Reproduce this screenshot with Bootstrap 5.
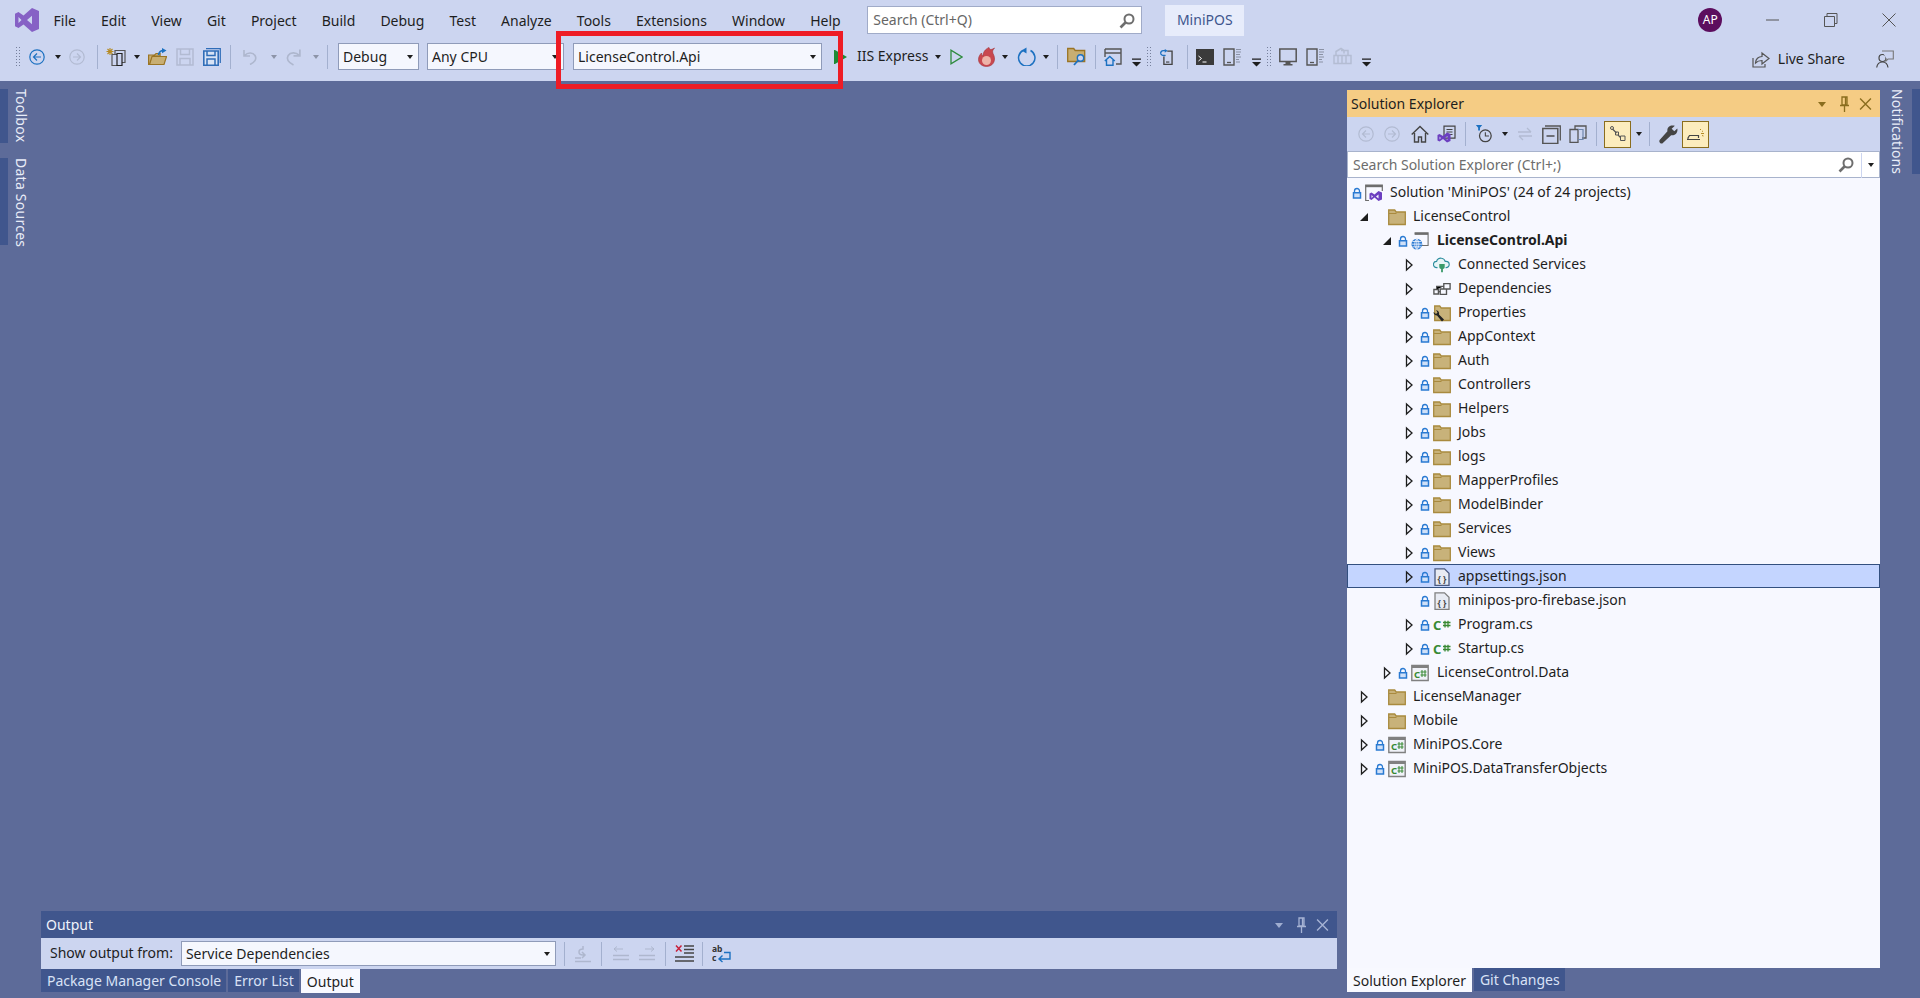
<!DOCTYPE html>
<html lang="en">
<head>
  <meta charset="UTF-8" />
  <meta name="viewport" content="width=device-width, initial-scale=1.0" />
  <title>MiniPOS - Visual Studio</title>
  <link href="https://cdn.jsdelivr.net/npm/bootstrap@5.3.1/dist/css/bootstrap.min.css" rel="stylesheet" />
  <style>
    html, body { height: 100%; }
    body { width: 1920px; height: 998px; overflow: hidden; background: #5d6b99; color: #1e1e1e;
      font: 14px/1.2 "Noto Sans", "Open Sans", sans-serif; position: relative; }
    .chrome { background: #ccd5f0; height: 81px; }
    .menu-row { height: 40px; }
    .tool-row { height: 41px; padding-bottom: 8px; }
    .vs-logo { width: 24px; height: 24px; margin-left: 15px; }
    .menu-row .nav { margin-left: 2px; }
    .menu-row .nav-link { color: #1e1e1e; padding: 1px 12.55px 0; line-height: 40px; font-size: 14px; }
    .top-search { width: 275px; height: 28px; margin-left: 14px; background: #fff; border: 1px solid #a0abc8; padding: 1px 6px 0 5px; color: #666; }
    .sol-name { width: 79px; height: 31px; margin-left: 23px; background: #e7ecfb; color: #40568d; }
    .avatar { width: 24px; height: 24px; background: #5c0e5e; color: #fff; font-size: 12px; margin-left: 454px; }
    .win-btn { width: 16px; height: 16px; }
    .win-min { margin-left: 43px; } .win-max { margin-left: 42px; } .win-x { margin-left: 42px; }

    .combo { height: 27px; background: #f5f7fe; border: 1px solid #8f9bb9; padding: 1px 5px 0 4px; flex: none; }
    .combo-debug { width: 81px; } .combo-cpu { width: 137px; } .combo-proj { width: 249px; }
    .combo-out { width: 375px; height: 25px; margin-left: 8px; }
    .caret { width: 0; height: 0; flex: none; border: 3.5px solid transparent; border-top: 4px solid #1e1e1e; border-bottom: 0; }
    .caret-off { border-top-color: #8d94a8; }
    .caret-lite { border-width: 5px 4.5px 0; border-top-color: #9fadd0; }
    .caret-gold { border-width: 5px 4.5px 0; border-top-color: #8a6d1e; }
    .sep { width: 1px; height: 24px; background: #a3b0cf; flex: none; }
    .grip { width: 5px; height: 22px; flex: none; background-image: radial-gradient(#76809c 0.8px, transparent 1px); background-size: 3px 3px; }
    svg { flex: none; }
    .i-blue { color: #1c71c1; } .i-off { color: #b2bbd2; } .i-lite { color: #a6b3d4; } .i-gold { color: #8a6d1e; }
    .json-on { color: #4a5a80; } .json-off { color: #808080; }
    .w9 { width: 9px; height: 20px; } .w13 { width: 13px; height: 16px; } .w16 { width: 16px; height: 16px; }
    .w17 { width: 17px; height: 20px; } .w18 { width: 18px; height: 18px; } .w19 { width: 19px; height: 19px; } .w20 { width: 20px; height: 20px; }
    .l4 { margin-left: 4px; } .l5 { margin-left: 5px; } .l7 { margin-left: 7px; } .l8 { margin-left: 8px; } .l9 { margin-left: 9px; }
    .l10 { margin-left: 10px; } .l11 { margin-left: 11px; } .l12 { margin-left: 12px; } .l13 { margin-left: 13px; } .l15 { margin-left: 15px; } .l31 { margin-left: 31px; }
    .live-share { margin-top: 5px; margin-right: 26px; }
    .red-box { position: absolute; left: 556px; top: 31px; width: 287px; height: 58px; border: 5px solid #ee1c25; }

    .work { height: 917px; }
    .rail-left { width: 41px; padding-top: 8px; }
    .rail-tab { color: #e9edf8; writing-mode: vertical-rl; font-size: 14px; line-height: 15px; letter-spacing: .25px; }
    .rail-strip { width: 8px; background: #40568d; }
    .tab-box { height: 54px; margin-bottom: 15px; }
    .tab-data { height: 87px; }
    .rail-text { margin-left: 6px; white-space: nowrap; }
    .center { width: 1296px; padding-bottom: 5px; }
    .out-title { height: 27px; background: #40568d; color: #f0f3fb; padding: 1px 8px 0 5px; }
    .out-tools { height: 31px; background: #ccd5f0; padding-left: 9px; }
    .tab-strip { height: 24px; }
    .tab-off { background: #40568d; color: #d9e2f6; padding: 2px 5px 0 6px; height: 23px; margin-right: 2px; }
    .tab-on { background: #f8f9ff; color: #1e1e1e; padding: 2px 6px 0; height: 24px; margin-right: 2px; }
    .sol-panel { width: 533px; margin-left: 10px; margin-top: 9px; }
    .sol-title { height: 27px; background: #f5cc84; padding: 1px 8px 0 4px; }
    .sol-tools { height: 34px; background: #ccd5f0; padding-left: 11px; }
    .on-btn { width: 27px; height: 27px; background: #fcecbd; border: 1px solid #8a6d1e; flex: none; }
    .sol-search { height: 27px; background: #fff; border: 1px solid #a8b3cc; padding: 1px 0 0 5px; color: #6d6d6d; }
    .search-div { width: 18px; margin-left: 7px; height: 25px; border-left: 1px solid #ccd5f0; }
    .sol-tree { height: 790px; background: #f7f8ff; padding-top: 2px; }
    .tree-row { height: 24px; padding-top: 1px; }
    .tree-on { background: #c4d5ff; box-shadow: inset 0 0 0 1px #33507f; }
    .lv0 { padding-left: 2px; } .lv1 { padding-left: 9px; } .lv2 { padding-left: 32px; } .lv3 { padding-left: 54px; }
    .xp { width: 16px; height: 14px; display: block; flex: none; }
    .lk { width: 16px; height: 14px; display: block; flex: none; }
    .ic { width: 18px; height: 18px; margin-right: 7px; flex: none; }
    .lv2 .ic { margin-right: 8px; }
    .rail-right { width: 40px; padding-top: 8px; }
    .rail-note { height: 85px; }
    .rail-right .rail-text { margin-left: 10px; margin-right: 7px; letter-spacing: .15px; }
  </style>
</head>
<body>
<svg class="d-none" xmlns="http://www.w3.org/2000/svg">
  <symbol id="i-vs" viewBox="0 0 24 24"><path fill="#8661c5" fill-rule="evenodd" d="M17 0l7 3v18l-7 3-8.500-7.500L3.500 20 0 18.300V5.700L3.500 4 8.500 7.500zM3.500 9v6L6.500 12zM12 12l5 4.200V7.800z"/></symbol>
  <symbol id="i-back" viewBox="0 0 16 16"><circle cx="8" cy="8" r="7.200" fill="none" stroke="currentColor" stroke-width="1.200"/><path fill="none" stroke="currentColor" stroke-width="1.200" d="M12 8H4.500M8 4.500L4.500 8 8 11.500"/></symbol>
  <symbol id="i-fwd" viewBox="0 0 16 16"><circle cx="8" cy="8" r="7.200" fill="none" stroke="currentColor" stroke-width="1.200"/><path fill="none" stroke="currentColor" stroke-width="1.200" d="M4 8h7.500M8 4.500L11.500 8 8 11.500"/></symbol>
  <symbol id="i-new" viewBox="0 0 20 20"><path stroke="#b58a22" stroke-width="1.100" d="M4 1v7M.5 4.500h7M1.500 2l5 5M6.500 2l-5 5"/><path fill="#ccd5f0" stroke="#555" stroke-width="1.200" d="M9 3.500h10v12H9z"/><path fill="#ccd5f0" stroke="#555" stroke-width="1.200" d="M6 7.500h6v11H6z"/><path fill="#ccd5f0" stroke="#222" stroke-width="1.200" d="M11 6.500h5v12h-5z"/></symbol>
  <symbol id="i-open" viewBox="0 0 19 18"><path fill="#c8ae72" stroke="#9a7424" stroke-width="1.200" d="M.6 7.500h6l1.500-1.500h4v2.500H5L2 17H.6z"/><path fill="#c8ae72" stroke="#9a7424" stroke-width="1.200" d="M4 9h14.500L16 17H1.500z"/><path fill="none" stroke="#1c71c1" stroke-width="1.700" d="M10.500 7.500c.5-3 2.500-4.500 5-4.500"/><path fill="#1c71c1" d="M14 .5L18.500 3 14 5.700z"/></symbol>
  <symbol id="i-save" viewBox="0 0 18 18"><path fill="none" stroke="currentColor" stroke-width="1.500" d="M1 1h16v16H1zM4.500 1v5.500h9V1M4 17v-6.500h10V17"/></symbol>
  <symbol id="i-saveall" viewBox="0 0 18 18"><path fill="none" stroke="#2f6db8" stroke-width="1.200" d="M3 .7h14.300V15"/><path fill="#d8e3f5" stroke="#2f6db8" stroke-width="1.600" d="M.8 3h14.400v14.200H.8z"/><path fill="none" stroke="#2f6db8" stroke-width="1.500" d="M4 3v4.500h8V3M4 17v-6h8v6"/></symbol>
  <symbol id="i-undo" viewBox="0 0 16 16"><path fill="none" stroke="#aeb7ce" stroke-width="1.600" d="M2 1v6h6M2.500 6.500C6 3 11 3.500 13 6.500c2 3.500 0 6.500-5 9"/></symbol>
  <symbol id="i-redo" viewBox="0 0 16 16"><path fill="none" stroke="#aeb7ce" stroke-width="1.600" d="M14 1v6H8M13.500 6.500C10 3 5 3.500 3 6.500c-2 3.500 0 6.500 5 9"/></symbol>
  <symbol id="i-play" viewBox="0 0 13 16"><path fill="#1e8a35" d="M0 1h1l12 7-12 7H0z"/></symbol>
  <symbol id="i-playo" viewBox="0 0 13 16"><path fill="none" stroke="#2e8b3e" stroke-width="1.300" d="M1 1.200v13.600L12 8z"/></symbol>
  <symbol id="i-fire" viewBox="0 0 17 20"><path fill="#c84850" stroke="#a33338" stroke-width=".6" d="M11 .5c.5 2.500 2.500 2.500 5.500.5-1.500 2-2.500 3-1.500 5.500 1 2 1.500 3.500 1.500 5.500 0 4.500-3.500 7.500-8 7.500S.5 16.500.5 12.500c0-3 1.500-5 3-6.500 0 1.500.5 2.500 1.500 3C5 5 7.500 2 11 .5z"/><ellipse cx="8.500" cy="13.500" rx="4.500" ry="4.500" fill="#eeb3a8"/></symbol>
  <symbol id="i-redo2" viewBox="0 0 19 19"><path fill="none" stroke="#1c71c1" stroke-width="1.500" d="M6 3.500a8.200 8.200 0 1 0 7.500 0"/><path fill="#1c71c1" d="M9.500 .5v6L4.500 3.500z"/></symbol>
  <symbol id="i-fsearch" viewBox="0 0 19 19"><path fill="#c8ae72" stroke="#9a7424" stroke-width="1.300" d="M.7 1.500h6l1.500 2h9.500v11H.7z"/><circle cx="13.500" cy="11" r="3.200" fill="#ccd5f0" stroke="#1c71c1" stroke-width="1.400"/><path stroke="#1c71c1" stroke-width="1.800" d="M11 13.500l-4 4.500"/></symbol>
  <symbol id="i-winhome" viewBox="0 0 18 18"><path fill="none" stroke="#555" stroke-width="1.400" d="M1 1h16v15h-5M1 1v8M1 5h16"/><path fill="#ccd5f0" stroke="#1c71c1" stroke-width="1.400" d="M.8 13l5-4.500 5 4.500M2.500 12v5.300h6.500V12"/></symbol>
  <symbol id="i-over" viewBox="0 0 9 20"><path fill="#1e1e1e" d="M0 11.500h9v1.300H0zM0 15h9L4.500 19.500z"/></symbol>
  <symbol id="i-phone" viewBox="0 0 16 19"><path fill="none" stroke="#444" stroke-width="1.600" d="M9.500 2.500h5.700v15.700H5.500V9"/><path stroke="#444" stroke-width="1.400" d="M8 15.500h4"/><path fill="none" stroke="#1c71c1" stroke-width="1.600" d="M7.500 7.500C5.500 8 3 7.500 2 6c-1-2 .5-4 3-4h2"/><path fill="#1c71c1" d="M6.500 0v4.500L10 2z"/></symbol>
  <symbol id="i-term" viewBox="0 0 18 16"><path fill="#3b3b3b" d="M0 0h18v16H0z"/><path fill="none" stroke="#fff" stroke-width="1" d="M2.500 7l3 2.500-3 2.500M6.500 13h4"/></symbol>
  <symbol id="i-tablet" viewBox="0 0 18 18"><path fill="#ccd5f0" stroke="#555" stroke-width="1.400" d="M1 1h10v16H1z"/><path stroke="#555" stroke-width="1.300" d="M4 14.500h4"/><path stroke="#8a91a4" stroke-width="1.200" d="M13 1.500h5M13 4h5M13 6.500h4M13 9h5M13 11.500h3M13 14h4"/></symbol>
  <symbol id="i-mon" viewBox="0 0 18 18"><path fill="#ccd5f0" stroke="#555" stroke-width="1.500" d="M.8 1h16.400v12.500H.8z"/><path fill="#555" d="M6.500 13.500h5V16h2v1.500h-9V16h2z"/></symbol>
  <symbol id="i-pkg" viewBox="0 0 19 18"><path fill="none" stroke="#b4bdd3" stroke-width="1.500" d="M3 8V4l5-3 3 2v3M1 8h17v8H1zM5 8v8M9 8v8M13 8v8M8 3h7v5"/></symbol>
  <symbol id="i-mag" viewBox="0 0 16 16"><circle cx="10" cy="6" r="4.500" fill="none" stroke="#6e6e6e" stroke-width="2"/><path stroke="#6e6e6e" stroke-width="2.600" d="M6.500 9.500L1.500 14.500"/></symbol>
  <symbol id="i-share" viewBox="0 0 18 18"><path fill="none" stroke="#555" stroke-width="1.200" d="M1 8v9h12v-3"/><path fill="#ccd5f0" stroke="#555" stroke-width="1.200" d="M3.500 13c0-4 3-6.500 6.500-6.500V3l7 5.500L10 14v-3.500c-3 0-5 1-6.500 2.500z"/></symbol>
  <symbol id="i-person" viewBox="0 0 18 18"><circle cx="6.500" cy="8" r="3.500" fill="none" stroke="#444" stroke-width="1.200"/><path fill="none" stroke="#444" stroke-width="1.200" d="M.7 17.500c.5-3.500 3-5.500 5.800-5.500s5 2 5.500 5.500"/><path fill="#ccd5f0" stroke="#777" stroke-width="1.100" d="M6 1h11.300v8H12l-2 2V8"/></symbol>
  <symbol id="i-pin" viewBox="0 0 12 16"><path fill="none" stroke="currentColor" stroke-width="1.300" d="M3.500 1h5v8h-5zM7 1v8M1.500 9.500h9M6 9.500V16"/></symbol>
  <symbol id="i-x" viewBox="0 0 12 12"><path fill="none" stroke="currentColor" stroke-width="1.300" d="M1 1l10 10M11 1L1 11"/></symbol>
  <symbol id="i-home" viewBox="0 0 18 18"><path fill="none" stroke="#444" stroke-width="1.400" d="M.7 9.500L9 1.500l8.300 8M3.500 8v9h4v-5h3v5h4V8"/></symbol>
  <symbol id="i-vsprops" viewBox="0 0 19 18"><path fill="#ccd5f0" stroke="#444" stroke-width="1.200" d="M7 .7h11v12H7z"/><path stroke="#444" stroke-width="1.100" d="M9.500 4h6M9.500 6.500h6M9.500 9h6"/><path fill="#6c3fc0" fill-rule="evenodd" d="M10 7l3.500 1.500v7L10 17l-4-3.500L2.500 16 .5 15V9.500l2-1L6 10.500zM2.500 11v3L4 12.500zM8 12.500l2.500 2v-4z"/></symbol>
  <symbol id="i-pending" viewBox="0 0 18 20"><path fill="#1c71c1" d="M0 0h7L4.500 3v3h-2V3z"/><circle cx="10.500" cy="12" r="6.500" fill="none" stroke="#444" stroke-width="1.400"/><path fill="none" stroke="#444" stroke-width="1.200" d="M10.500 8v4.300h4"/></symbol>
  <symbol id="i-sync" viewBox="0 0 16 16"><path fill="none" stroke="#b2bbd2" stroke-width="1.300" d="M1 6h13M10 2l4 4M15 10H2M6 14l-4-4"/></symbol>
  <symbol id="i-coll" viewBox="0 0 19 19"><path fill="none" stroke="#555" stroke-width="1.300" d="M3 1h15.300v14.500"/><path fill="#ccd5f0" stroke="#555" stroke-width="1.500" d="M.8 3.500h15v15H.8z"/><path stroke="#444" stroke-width="1.400" d="M4.500 11h8"/></symbol>
  <symbol id="i-copy" viewBox="0 0 18 18"><path fill="none" stroke="#555" stroke-width="1.300" d="M6 4V1h11v12h-4"/><path fill="#ccd5f0" stroke="#555" stroke-width="1.300" d="M1 4.500h8v13H1z"/><path fill="none" stroke="#6f87ad" stroke-width="1.200" d="M9 4.500h5v10H9"/></symbol>
  <symbol id="i-treev" viewBox="0 0 16 16"><path fill="none" stroke="#555" stroke-width="1.200" d="M2.500 3l4 4M8 9l2.500 2.500"/><circle cx="2" cy="2" r="1.500" fill="none" stroke="#555"/><path fill="none" stroke="#555" d="M5.500 6h3v3h-3zM10.500 10h4.500v4.500h-4.500z"/></symbol>
  <symbol id="i-wrench" viewBox="0 0 18 18"><path fill="#444" d="M12.500.5c-3 0-5 2.500-4.500 5.500L.8 14c-.8 1-.6 2.200.3 3 1 .8 2 .6 2.800-.3L11.500 9.700c3 .6 5.800-1.500 6-5 0-.5 0-1-.2-1.500L14.500 6 12 3.500 15 .8c-.8-.2-1.600-.3-2.500-.3z"/></symbol>
  <symbol id="i-sweep" viewBox="0 0 18 14"><path fill="none" stroke="#444" stroke-width="1.200" d="M1 12.500V11l1.500-2.500h9V11M0 12.500h13"/><path stroke="#b58a22" stroke-width="1" d="M13 2l1 1M16 4l-1 .5M14 6.500h3M15 8.500l1.500.5"/></symbol>
  <symbol id="i-down" viewBox="0 0 18 16"><path fill="none" stroke="#aeb7ce" stroke-width="1.500" d="M9 0v3c-3 0-4 1-4 3s1 3 4 3h1M8 6l3 3-3 3M1 12h6M1 15.500h16"/></symbol>
  <symbol id="i-prev" viewBox="0 0 16 16"><path fill="none" stroke="#aeb7ce" stroke-width="1" d="M1 3h9M4 .5L1 3l3 2.500"/><path stroke="#aeb7ce" stroke-width="1.700" d="M0 9.500h16M0 13.500h16"/></symbol>
  <symbol id="i-next" viewBox="0 0 16 16"><path fill="none" stroke="#aeb7ce" stroke-width="1" d="M6 3h9M12 .5L15 3l-3 2.500"/><path stroke="#aeb7ce" stroke-width="1.700" d="M0 9.500h16M0 13.500h16"/></symbol>
  <symbol id="i-clear" viewBox="0 0 19 18"><path fill="none" stroke="#c8203a" stroke-width="1.500" d="M1 1l5.500 6M6.500 1L1 7"/><path stroke="#444" stroke-width="1.300" d="M9 1.500h10M9 5h10M9 8.500h10"/><path stroke="#444" stroke-width="1.700" d="M0 12.500h19M0 16.500h19"/></symbol>
  <symbol id="i-wrap" viewBox="0 0 19 18"><text x="0" y="7.500" font-size="8.500" font-weight="700" font-family="Noto Sans" fill="#333">ab</text><text x="0" y="16" font-size="8.500" font-weight="700" font-family="Noto Sans" fill="#333">c</text><path fill="none" stroke="#1c71c1" stroke-width="1.400" d="M12 8h6v6.500H7M10.500 11L7 14.500l3.500 3"/></symbol>
  <symbol id="t-col" viewBox="0 0 16 14"><path fill="none" stroke="#1e1e1e" stroke-width="1.300" d="M5.500 2L11 7l-5.500 5z"/></symbol>
  <symbol id="t-exp" viewBox="0 0 16 14"><path fill="#1e1e1e" d="M12 3v8H4z"/></symbol>
  <symbol id="t-lock" viewBox="0 0 16 14"><path fill="none" stroke="#2a7ad2" stroke-width="1.300" d="M5.500 7V5a2.500 2.500 0 0 1 5 0v2"/><path fill="#cfe0f8" stroke="#2a7ad2" stroke-width="1.500" d="M4.500 6.800h7V12h-7z"/></symbol>
  <symbol id="t-folder" viewBox="0 0 18 18"><path fill="#c8b27a" stroke="#a98a3e" stroke-width="1.300" d="M.7 2h6l1.500 2h9.100v12.500H.7z"/><path stroke="#a98a3e" d="M1 5.500h7.500"/></symbol>
  <symbol id="t-sol" viewBox="0 0 18 18"><path fill="none" stroke="#6d6d6d" stroke-width="1.200" d="M.7 1h16.600v15.500H.7z"/><path fill="#6d6d6d" d="M.7 1h16.600v2.200H.7z"/><path fill="#f7f8ff" d="M4 7h14v11H4z"/><path fill="#6c3fc0" fill-rule="evenodd" d="M13.500 7l3.500 1.500v7L13.500 17l-4-3.500L6.500 16l-2-1V9.500l2-1 3 2zM6.500 11v3L8 12.500zM11 12.500l2.500 2v-4z"/></symbol>
  <symbol id="t-web" viewBox="0 0 20 20"><path fill="none" stroke="#6d6d6d" stroke-width="1.200" d="M4 1h15v14H12"/><path fill="#6d6d6d" d="M4 1h15v2.200H4z"/><circle cx="6.500" cy="13.500" r="6" fill="#2a7ad2"/><path fill="none" stroke="#f7f8ff" stroke-width=".9" d="M.5 13.500h12M1.500 10.500h10M1.500 16.500h10M6.500 7.500v12M6.500 7.500c-3 3-3 9 0 12M6.500 7.500c3 3 3 9 0 12"/></symbol>
  <symbol id="t-cloud" viewBox="0 0 20 18"><path fill="#e8f5f7" stroke="#2f8f9f" stroke-width="1.300" d="M5 12H4a3.500 3.500 0 0 1 0-7c.5-2.500 3-4 5.500-3.500 2 .3 3.500 1.500 4 3.500h1a3.500 3.500 0 0 1 0 7H14"/><path fill="#3a9a6a" d="M7 8h6v3c0 1.500-1 2.500-2 2.500V17H9v-3.500c-1 0-2-1-2-2.500z"/></symbol>
  <symbol id="t-dep" viewBox="0 0 20 18"><path fill="#f7f8ff" stroke="#555" stroke-width="1.500" d="M12 3h7v6h-7zM8 9h7v6H8zM1 9.500h5v5H1z"/><path stroke="#555" stroke-width="1.300" d="M6 12h2M4 9.500V6h8"/></symbol>
  <symbol id="t-props" viewBox="0 0 18 18"><path fill="#c8b27a" stroke="#a98a3e" stroke-width="1.300" d="M1.700 2h5l1.500 2h9.100v12.500H1.700z"/><path fill="#222" d="M.5 8c0 2 1.500 3.500 3.500 3.500l5 6 2-2-5-5c.5-2-.5-4-3-4.500l1.500 2.500L3 10z"/></symbol>
  <symbol id="t-json" viewBox="0 0 18 18"><path fill="#e8ebf3" stroke="currentColor" stroke-width="1.300" d="M2 .8h9.500l4.500 4.500v12H2z"/><text x="9" y="14" font-size="8.500" font-weight="700" text-anchor="middle" font-family="Noto Sans" fill="#444">{ }</text></symbol>
  <symbol id="t-cs" viewBox="0 0 18 18"><text x="0" y="14" font-size="13" font-weight="700" font-family="Noto Sans" fill="#388a34">C</text><path stroke="#388a34" stroke-width="1.300" d="M10 6.500h7.500M10 9.500h7.500M12 4.700v6.800M15 4.700v6.800"/></symbol>
  <symbol id="t-csproj" viewBox="0 0 18 18"><path fill="#f0f2f8" stroke="#808080" stroke-width="1.400" d="M.8 1.500h16.400v15H.8z"/><path stroke="#808080" stroke-width="2" d="M1 3h16"/><text x="3" y="13.500" font-size="9.500" font-weight="700" font-family="Noto Sans" fill="#388a34">C</text><path stroke="#388a34" d="M9.500 8h6M9.500 11h6M11 6v7M14 6v7"/></symbol>
</svg>

<div class="chrome">
  <div class="menu-row d-flex align-items-center">
    <svg class="vs-logo"><use href="#i-vs"/></svg>
    <ul class="nav flex-nowrap">
      <li class="nav-item"><a class="nav-link" href="#">File</a></li>
      <li class="nav-item"><a class="nav-link" href="#">Edit</a></li>
      <li class="nav-item"><a class="nav-link" href="#">View</a></li>
      <li class="nav-item"><a class="nav-link" href="#">Git</a></li>
      <li class="nav-item"><a class="nav-link" href="#">Project</a></li>
      <li class="nav-item"><a class="nav-link" href="#">Build</a></li>
      <li class="nav-item"><a class="nav-link" href="#">Debug</a></li>
      <li class="nav-item"><a class="nav-link" href="#">Test</a></li>
      <li class="nav-item"><a class="nav-link" href="#">Analyze</a></li>
      <li class="nav-item"><a class="nav-link" href="#">Tools</a></li>
      <li class="nav-item"><a class="nav-link" href="#">Extensions</a></li>
      <li class="nav-item"><a class="nav-link" href="#">Window</a></li>
      <li class="nav-item"><a class="nav-link" href="#">Help</a></li>
    </ul>
    <div class="top-search d-flex align-items-center justify-content-between"><span>Search (Ctrl+Q)</span><svg class="w16"><use href="#i-mag"/></svg></div>
    <div class="sol-name d-flex align-items-center justify-content-center">MiniPOS</div>
    <div class="avatar rounded-circle d-flex align-items-center justify-content-center">AP</div>
    <svg class="win-btn win-min" viewBox="0 0 16 16"><path stroke="#555" d="M1 8h13"/></svg>
    <svg class="win-btn win-max" viewBox="0 0 16 16"><path fill="none" stroke="#555" d="M4 4V1.500h10v10h-2.500M1.500 4.500h10v10h-10z"/></svg>
    <svg class="win-btn win-x" viewBox="0 0 16 16"><path stroke="#555" d="M1.500 1.500l13 13M14.500 1.500l-13 13"/></svg>
  </div>
  <div class="tool-row d-flex align-items-center">
    <div class="grip l15"></div>
    <svg class="w16 l9 i-blue"><use href="#i-back"/></svg><span class="caret l10"></span>
    <svg class="w16 l8 i-off"><use href="#i-fwd"/></svg>
    <div class="sep l12"></div>
    <svg class="w20 l8"><use href="#i-new"/></svg><span class="caret l8"></span>
    <svg class="w19 l8"><use href="#i-open"/></svg>
    <svg class="w18 l9 i-off"><use href="#i-save"/></svg>
    <svg class="w18 l9"><use href="#i-saveall"/></svg>
    <div class="sep l9"></div>
    <svg class="w16 l11"><use href="#i-undo"/></svg><span class="caret caret-off l13"></span>
    <svg class="w17 l8"><use href="#i-redo"/></svg><span class="caret caret-off l11"></span>
    <div class="sep l8"></div>
    <div class="combo combo-debug l10 d-flex align-items-center justify-content-between"><span>Debug</span><span class="caret"></span></div>
    <div class="combo combo-cpu l8 d-flex align-items-center justify-content-between"><span>Any CPU</span><span class="caret"></span></div>
    <div class="combo combo-proj l9 d-flex align-items-center justify-content-between"><span>LicenseControl.Api</span><span class="caret"></span></div>
    <svg class="w13 l12"><use href="#i-play"/></svg>
    <span class="l10">IIS Express</span><span class="caret l7"></span>
    <svg class="w13 l9"><use href="#i-playo"/></svg>
    <svg class="w17 l15"><use href="#i-fire"/></svg><span class="caret l7"></span>
    <svg class="w19 l9"><use href="#i-redo2"/></svg><span class="caret l7"></span>
    <div class="sep l8"></div>
    <svg class="w19 l9"><use href="#i-fsearch"/></svg>
    <div class="sep l9"></div>
    <svg class="w18 l8"><use href="#i-winhome"/></svg>
    <svg class="w9 l10"><use href="#i-over"/></svg>
    <div class="grip l5"></div>
    <svg class="w16 l7"><use href="#i-phone"/></svg>
    <div class="sep l13"></div>
    <svg class="w18 l8"><use href="#i-term"/></svg>
    <svg class="w18 l9"><use href="#i-tablet"/></svg>
    <svg class="w9 l11"><use href="#i-over"/></svg>
    <div class="grip l5"></div>
    <svg class="w18 l8"><use href="#i-mon"/></svg>
    <svg class="w18 l9"><use href="#i-tablet"/></svg>
    <svg class="w19 l9"><use href="#i-pkg"/></svg>
    <svg class="w9 l10"><use href="#i-over"/></svg>
    <div class="live-share ms-auto d-flex align-items-center">
      <svg class="w18"><use href="#i-share"/></svg>
      <span class="l8">Live Share</span>
      <svg class="w18 l31"><use href="#i-person"/></svg>
    </div>
  </div>
</div>
<div class="red-box"></div>

<div class="work d-flex">
  <div class="rail-left">
    <div class="tab-box d-flex"><div class="rail-strip"></div><div class="rail-tab rail-text">Toolbox</div></div>
    <div class="tab-data d-flex"><div class="rail-strip"></div><div class="rail-tab rail-text">Data Sources</div></div>
  </div>
  <div class="center d-flex flex-column justify-content-end">
    <div class="out-title d-flex align-items-center"><span class="me-auto">Output</span><span class="caret caret-lite"></span><svg class="w13 l12 i-lite"><use href="#i-pin"/></svg><svg class="w13 l8 i-lite"><use href="#i-x"/></svg></div>
    <div class="out-tools d-flex align-items-center">
      <span>Show output from:</span>
      <div class="combo combo-out d-flex align-items-center justify-content-between"><span>Service Dependencies</span><span class="caret"></span></div>
      <div class="sep l8"></div>
      <svg class="w18 l9"><use href="#i-down"/></svg>
      <div class="sep l9"></div>
      <svg class="w16 l11"><use href="#i-prev"/></svg>
      <svg class="w16 l10"><use href="#i-next"/></svg>
      <div class="sep l10"></div>
      <svg class="w19 l9"><use href="#i-clear"/></svg>
      <div class="sep l8"></div>
      <svg class="w19 l9"><use href="#i-wrap"/></svg>
    </div>
    <ul class="tab-strip nav flex-nowrap align-items-start">
      <li class="tab-off d-flex align-items-center">Package Manager Console</li>
      <li class="tab-off d-flex align-items-center">Error List</li>
      <li class="tab-on d-flex align-items-center">Output</li>
    </ul>
  </div>
  <div class="sol-panel">
    <div class="sol-title d-flex align-items-center"><span class="me-auto">Solution Explorer</span><span class="caret caret-gold"></span><svg class="w13 l12 i-gold"><use href="#i-pin"/></svg><svg class="w13 l8 i-gold"><use href="#i-x"/></svg></div>
    <div class="sol-tools d-flex align-items-center">
      <svg class="w16 i-off"><use href="#i-back"/></svg>
      <svg class="w16 l10 i-off"><use href="#i-fwd"/></svg>
      <svg class="w18 l11"><use href="#i-home"/></svg>
      <svg class="w19 l8"><use href="#i-vsprops"/></svg>
      <div class="sep l9"></div>
      <svg class="w18 l9"><use href="#i-pending"/></svg><span class="caret l9"></span>
      <svg class="w16 l9"><use href="#i-sync"/></svg>
      <svg class="w19 l9"><use href="#i-coll"/></svg>
      <svg class="w18 l8"><use href="#i-copy"/></svg>
      <div class="sep l9"></div>
      <div class="on-btn l7 d-flex align-items-center justify-content-center"><svg class="w16"><use href="#i-treev"/></svg></div>
      <span class="caret l5"></span>
      <div class="sep l7"></div>
      <svg class="w19 l9"><use href="#i-wrench"/></svg>
      <div class="on-btn l4 d-flex align-items-center justify-content-center"><svg class="w18"><use href="#i-sweep"/></svg></div>
    </div>
    <div class="sol-search d-flex align-items-center">
      <span class="me-auto">Search Solution Explorer (Ctrl+;)</span>
      <svg class="w16"><use href="#i-mag"/></svg>
      <div class="search-div d-flex align-items-center justify-content-center"><span class="caret"></span></div>
    </div>
    <ul class="sol-tree list-unstyled mb-0">
      <li class="tree-row lv0 d-flex align-items-center"><svg class="lk"><use href="#t-lock"/></svg><svg class="ic"><use href="#t-sol"/></svg>Solution 'MiniPOS' (24 of 24 projects)</li>
      <li class="tree-row lv1 d-flex align-items-center"><svg class="xp"><use href="#t-exp"/></svg><span class="lk"></span><svg class="ic"><use href="#t-folder"/></svg>LicenseControl</li>
      <li class="tree-row lv2 d-flex align-items-center fw-bold"><svg class="xp"><use href="#t-exp"/></svg><svg class="lk"><use href="#t-lock"/></svg><svg class="ic"><use href="#t-web"/></svg>LicenseControl.Api</li>
      <li class="tree-row lv3 d-flex align-items-center"><svg class="xp"><use href="#t-col"/></svg><span class="lk"></span><svg class="ic"><use href="#t-cloud"/></svg>Connected Services</li>
      <li class="tree-row lv3 d-flex align-items-center"><svg class="xp"><use href="#t-col"/></svg><span class="lk"></span><svg class="ic"><use href="#t-dep"/></svg>Dependencies</li>
      <li class="tree-row lv3 d-flex align-items-center"><svg class="xp"><use href="#t-col"/></svg><svg class="lk"><use href="#t-lock"/></svg><svg class="ic"><use href="#t-props"/></svg>Properties</li>
      <li class="tree-row lv3 d-flex align-items-center"><svg class="xp"><use href="#t-col"/></svg><svg class="lk"><use href="#t-lock"/></svg><svg class="ic"><use href="#t-folder"/></svg>AppContext</li>
      <li class="tree-row lv3 d-flex align-items-center"><svg class="xp"><use href="#t-col"/></svg><svg class="lk"><use href="#t-lock"/></svg><svg class="ic"><use href="#t-folder"/></svg>Auth</li>
      <li class="tree-row lv3 d-flex align-items-center"><svg class="xp"><use href="#t-col"/></svg><svg class="lk"><use href="#t-lock"/></svg><svg class="ic"><use href="#t-folder"/></svg>Controllers</li>
      <li class="tree-row lv3 d-flex align-items-center"><svg class="xp"><use href="#t-col"/></svg><svg class="lk"><use href="#t-lock"/></svg><svg class="ic"><use href="#t-folder"/></svg>Helpers</li>
      <li class="tree-row lv3 d-flex align-items-center"><svg class="xp"><use href="#t-col"/></svg><svg class="lk"><use href="#t-lock"/></svg><svg class="ic"><use href="#t-folder"/></svg>Jobs</li>
      <li class="tree-row lv3 d-flex align-items-center"><svg class="xp"><use href="#t-col"/></svg><svg class="lk"><use href="#t-lock"/></svg><svg class="ic"><use href="#t-folder"/></svg>logs</li>
      <li class="tree-row lv3 d-flex align-items-center"><svg class="xp"><use href="#t-col"/></svg><svg class="lk"><use href="#t-lock"/></svg><svg class="ic"><use href="#t-folder"/></svg>MapperProfiles</li>
      <li class="tree-row lv3 d-flex align-items-center"><svg class="xp"><use href="#t-col"/></svg><svg class="lk"><use href="#t-lock"/></svg><svg class="ic"><use href="#t-folder"/></svg>ModelBinder</li>
      <li class="tree-row lv3 d-flex align-items-center"><svg class="xp"><use href="#t-col"/></svg><svg class="lk"><use href="#t-lock"/></svg><svg class="ic"><use href="#t-folder"/></svg>Services</li>
      <li class="tree-row lv3 d-flex align-items-center"><svg class="xp"><use href="#t-col"/></svg><svg class="lk"><use href="#t-lock"/></svg><svg class="ic"><use href="#t-folder"/></svg>Views</li>
      <li class="tree-row tree-on lv3 d-flex align-items-center"><svg class="xp"><use href="#t-col"/></svg><svg class="lk"><use href="#t-lock"/></svg><svg class="ic json-on"><use href="#t-json"/></svg>appsettings.json</li>
      <li class="tree-row lv3 d-flex align-items-center"><span class="xp"></span><svg class="lk"><use href="#t-lock"/></svg><svg class="ic json-off"><use href="#t-json"/></svg>minipos-pro-firebase.json</li>
      <li class="tree-row lv3 d-flex align-items-center"><svg class="xp"><use href="#t-col"/></svg><svg class="lk"><use href="#t-lock"/></svg><svg class="ic"><use href="#t-cs"/></svg>Program.cs</li>
      <li class="tree-row lv3 d-flex align-items-center"><svg class="xp"><use href="#t-col"/></svg><svg class="lk"><use href="#t-lock"/></svg><svg class="ic"><use href="#t-cs"/></svg>Startup.cs</li>
      <li class="tree-row lv2 d-flex align-items-center"><svg class="xp"><use href="#t-col"/></svg><svg class="lk"><use href="#t-lock"/></svg><svg class="ic"><use href="#t-csproj"/></svg>LicenseControl.Data</li>
      <li class="tree-row lv1 d-flex align-items-center"><svg class="xp"><use href="#t-col"/></svg><span class="lk"></span><svg class="ic"><use href="#t-folder"/></svg>LicenseManager</li>
      <li class="tree-row lv1 d-flex align-items-center"><svg class="xp"><use href="#t-col"/></svg><span class="lk"></span><svg class="ic"><use href="#t-folder"/></svg>Mobile</li>
      <li class="tree-row lv1 d-flex align-items-center"><svg class="xp"><use href="#t-col"/></svg><svg class="lk"><use href="#t-lock"/></svg><svg class="ic"><use href="#t-csproj"/></svg>MiniPOS.Core</li>
      <li class="tree-row lv1 d-flex align-items-center"><svg class="xp"><use href="#t-col"/></svg><svg class="lk"><use href="#t-lock"/></svg><svg class="ic"><use href="#t-csproj"/></svg>MiniPOS.DataTransferObjects</li>
    </ul>
    <ul class="tab-strip nav flex-nowrap align-items-start">
      <li class="tab-on d-flex align-items-center">Solution Explorer</li>
      <li class="tab-off d-flex align-items-center">Git Changes</li>
    </ul>
  </div>
  <div class="rail-right d-flex justify-content-between">
    <div class="rail-tab rail-text">Notifications</div>
    <div class="rail-strip rail-note"></div>
  </div>
</div>
<script src="https://cdn.jsdelivr.net/npm/bootstrap@5.3.1/dist/js/bootstrap.bundle.min.js"></script>
</body>
</html>
